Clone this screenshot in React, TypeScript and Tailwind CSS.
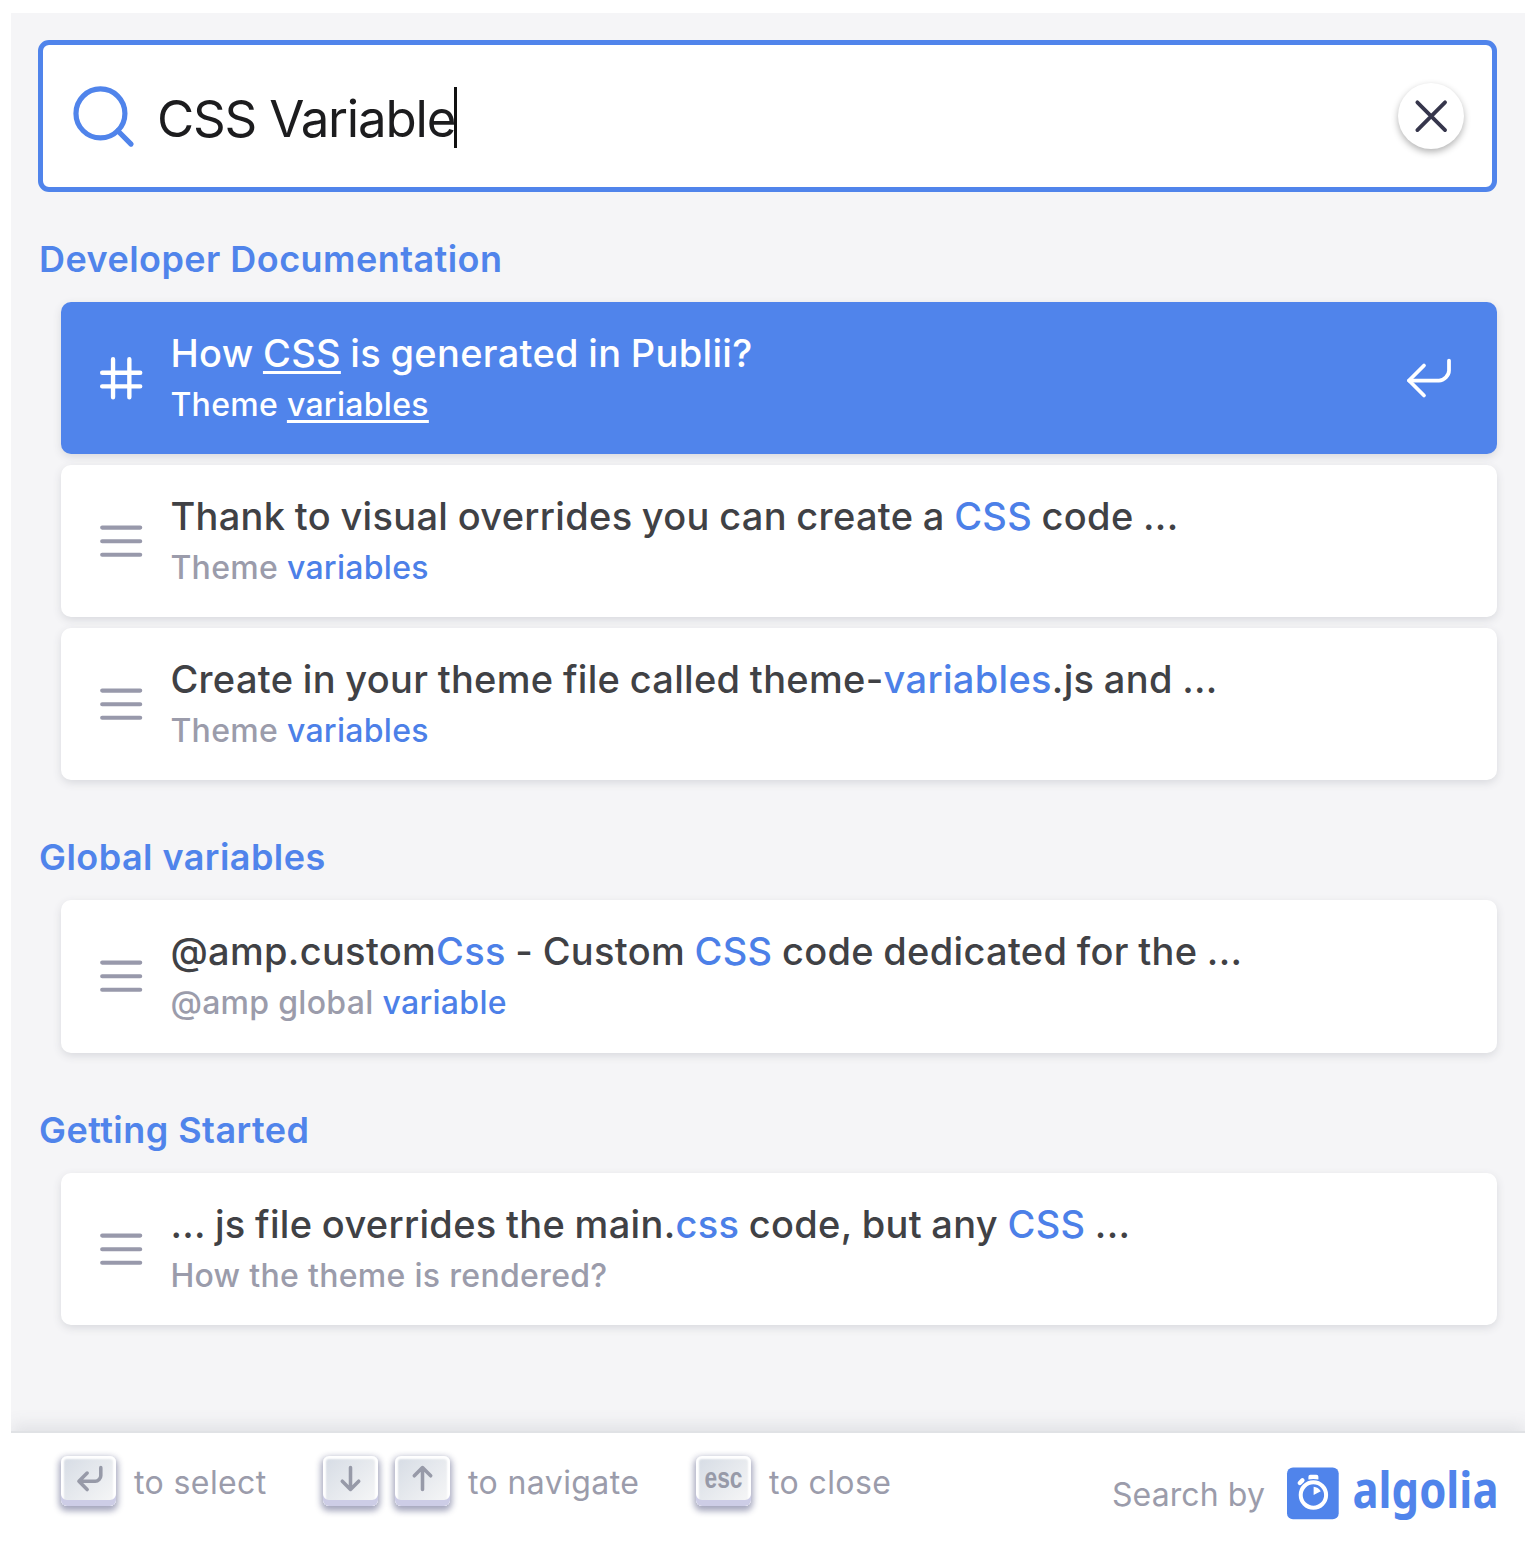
import { ReactNode } from 'react'
import clsx from 'clsx'

type Hit = {
  type: 'anchor' | 'content'
  title: string
  path: string
  selected?: boolean
}

type Section = {
  label: string
  hits: Hit[]
}

// Matched words are wrapped in square brackets
const sections: Section[] = [
  {
    label: 'Developer Documentation',
    hits: [
      { type: 'anchor', title: 'How [CSS] is generated in Publii?', path: 'Theme [variables]', selected: true },
      { type: 'content', title: 'Thank to visual overrides you can create a [CSS] code ...', path: 'Theme [variables]' },
      { type: 'content', title: 'Create in your theme file called theme-[variables].js and ...', path: 'Theme [variables]' },
    ],
  },
  {
    label: 'Global variables',
    hits: [
      {
        type: 'content',
        title: '@amp.custom[Css] - Custom [CSS] code dedicated for the ...',
        path: '@amp global [variable]',
      },
    ],
  },
  {
    label: 'Getting Started',
    hits: [
      {
        type: 'content',
        title: '... js file overrides the main.[css] code, but any [CSS] ...',
        path: 'How the theme is rendered?',
      },
    ],
  },
]

const hitIcons = {
  anchor: 'M13 13h4M13 8h4M3 8h10M3 13h10M7 3v14M13 3v14',
  content: 'M17 5H3M17 10H3M17 15H3',
}

function Highlighted({ text, selected }: { text: string; selected?: boolean }) {
  return (
    <>
      {text.split(/[[\]]/).map((part, index) =>
        index % 2 ? (
          <mark
            key={index}
            className={clsx(
              'bg-transparent',
              selected
                ? 'text-white underline decoration-[2.5px] underline-offset-[4px]'
                : 'text-[#4c80e8]'
            )}
          >
            {part}
          </mark>
        ) : (
          part
        )
      )}
    </>
  )
}

function HitRow({ hit }: { hit: Hit }) {
  return (
    <li
      className={clsx(
        'flex h-[152.4px] rounded-[10px] pl-[33px] pr-[43px] shadow-[0_3px_8px_0_#d9dade]',
        hit.selected ? 'bg-[#5084eb] text-white' : 'bg-white text-[#404145]'
      )}
    >
      <svg
        viewBox="0 0 20 20"
        fill="none"
        stroke="currentColor"
        strokeLinecap="round"
        className={clsx('size-[54.4px] shrink-0 self-center', !hit.selected && 'text-[#9899ab]')}
      >
        <path d={hitIcons[hit.type]} strokeWidth={hit.selected ? 1.6 : 1.5} />
      </svg>
      <div className="ml-[22px] flex-1 pt-[23px] font-medium whitespace-nowrap">
        <p className="mb-[2px] text-[38px] leading-[56px] tracking-[0.32px] [word-spacing:-1px]">
          <Highlighted text={hit.title} selected={hit.selected} />
        </p>
        <p
          className={clsx(
            'text-[32px] leading-[44px] tracking-[0.3px]',
            !hit.selected && 'text-[#9b9cab]'
          )}
        >
          <Highlighted text={hit.path} selected={hit.selected} />
        </p>
      </div>
      {hit.selected && (
        <svg
          viewBox="0 0 20 20"
          fill="none"
          stroke="currentColor"
          strokeWidth="1.5"
          strokeLinecap="round"
          strokeLinejoin="round"
          className="size-[50px] shrink-0 self-center"
        >
          <path d="M18 3v4c0 2-2 4-4 4H2" />
          <path d="M8 17l-6-6 6-6" />
        </svg>
      )}
    </li>
  )
}

function Key({ children }: { children: ReactNode }) {
  return (
    <kbd className="flex h-[50px] w-[55px] items-center justify-center rounded-[6px] bg-linear-[-225deg,#d5dbe4,#f8f8f8] pb-[5px] shadow-[inset_0_-6px_0_0_#cdcde6,inset_0_0_2px_3px_#fff,0_3px_6px_2px_rgba(30,35,90,0.4)]">
      {children}
    </kbd>
  )
}

function KeyIcon({ d }: { d: string }) {
  return (
    <svg
      viewBox="0 0 15 15"
      fill="none"
      stroke="#979aa8"
      strokeWidth="1.3"
      strokeLinecap="round"
      strokeLinejoin="round"
      className="size-[41px]"
    >
      <path d={d} />
    </svg>
  )
}

function AlgoliaLogo() {
  return (
    <svg
      viewBox="0 0 211 60"
      className="h-[60px] w-[211px] overflow-visible"
      fill="#5084eb"
      aria-label="Algolia"
    >
      <rect x="0" y="4.5" width="51.7" height="51.7" rx="6" />
      <circle cx="26.4" cy="32" r="12.7" fill="none" stroke="#fff" strokeWidth="4" />
      <path d="M21.4 16.6v-2.8q0-2 2-2h6q2 0 2 2v2.8q-5-1.2-10 0z" fill="#fff" />
      <path d="M12.8 20l2.6-2.6" stroke="#fff" strokeWidth="4.4" strokeLinecap="round" />
      <path d="M26.6 32v-8.2q4.6.4 7.2 4.4z" fill="#fff" />
      <text
        x="65.5"
        y="45"
        fontSize="51"
        fontWeight="700"
        textLength="146"
        lengthAdjust="spacingAndGlyphs"
        className="font-['Noto_Sans',sans-serif] tracking-normal"
      >
        algolia
      </text>
    </svg>
  )
}

export default function App() {
  return (
    <div className="h-[1568px] w-[1536px] overflow-hidden bg-white px-[11px] pt-[13px] font-['Inter',sans-serif]">
      <div className="flex h-[1555px] flex-col overflow-hidden">
        <div className="h-[1420px] shrink-0 bg-[#f5f5f7] pt-[27px] pr-[28px] pl-[27px]">
          <form className="flex h-[152px] items-center rounded-[11px] border-[5px] border-[#5084eb] bg-white pr-[28px] pl-[28px]">
            <svg
              viewBox="0 0 20 20"
              fill="none"
              stroke="#5084eb"
              strokeWidth="1.6"
              strokeLinecap="round"
              className="size-[65px] shrink-0"
            >
              <circle cx="9.06" cy="9.06" r="7.53" />
              <path d="M14.386 14.386l4.0877 4.0877" />
            </svg>
            <span className="ml-[21px] pt-[6px] text-[51px] leading-[60px] tracking-[-1.2px] whitespace-nowrap text-[#1c1c1e]">
              CSS Variable
            </span>
            <span className="mt-[3px] -ml-px h-[61px] w-[3px] bg-[#111]" />
            <button
              type="button"
              className="ml-auto flex size-[66px] items-center justify-center rounded-full bg-white shadow-[0_3px_7px_0_rgba(0,0,0,0.3)]"
            >
              <svg
                viewBox="0 0 20 20"
                fill="none"
                stroke="#36364c"
                strokeWidth="1.4"
                strokeLinecap="round"
                className="size-[54.4px]"
              >
                <path d="M4.91 4.91l10.18 10.18M15.09 4.91L4.91 15.09" />
              </svg>
            </button>
          </form>

          {sections.map((section) => (
            <section key={section.label} className="mb-[33px] first-of-type:mt-[22.8px]">
              <h2 className="flex h-[87px] items-center pt-px pl-px text-[36px] font-semibold tracking-[0.45px] whitespace-nowrap text-[#5084eb]">
                {section.label}
              </h2>
              <ul className="ml-[23px] flex flex-col gap-[10.6px]">
                {section.hits.map((hit) => (
                  <HitRow key={hit.title} hit={hit} />
                ))}
              </ul>
            </section>
          ))}
        </div>

        <footer className="flex h-[135px] shrink-0 items-start bg-white pr-[27px] pl-[50px] text-[32px] leading-[54px] tracking-[0.4px] whitespace-nowrap text-[#9b9cab] shadow-[0_-2px_0_0_#e0e2e5,0_-8px_16px_0_rgba(80,92,110,0.12)]">
          <ul className="flex pt-[23px]">
            <li className="flex w-[262px]">
              <Key>
                <KeyIcon d="M12 3.53v3c0 1-1 2-2 2H4M7 11.53l-3-3 3-3" />
              </Key>
              <span className="ml-[18px]">to select</span>
            </li>
            <li className="flex w-[373px]">
              <Key>
                <KeyIcon d="M7.5 3.5v8M10.5 8.5l-3 3-3-3" />
              </Key>
              <span className="ml-[17px]">
                <Key>
                  <KeyIcon d="M7.5 11.5v-8M10.5 6.5l-3-3-3 3" />
                </Key>
              </span>
              <span className="ml-[18px]">to navigate</span>
            </li>
            <li className="flex">
              <Key>
                <svg viewBox="0 0 41 41" className="size-[41px] overflow-visible">
                  <text
                    x="1.5"
                    y="29.5"
                    fontSize="29"
                    fontWeight="700"
                    fill="#979aa8"
                    textLength="38"
                    lengthAdjust="spacingAndGlyphs"
                    className="font-['Liberation_Sans',sans-serif] tracking-normal"
                  >
                    esc
                  </text>
                </svg>
              </Key>
              <span className="ml-[18px]">to close</span>
            </li>
          </ul>
          <div className="ml-auto flex items-center pt-[30px]">
            <span className="mr-[22px] pt-[4px] tracking-[0.1px]">Search by</span>
            <AlgoliaLogo />
          </div>
        </footer>
      </div>
    </div>
  )
}
